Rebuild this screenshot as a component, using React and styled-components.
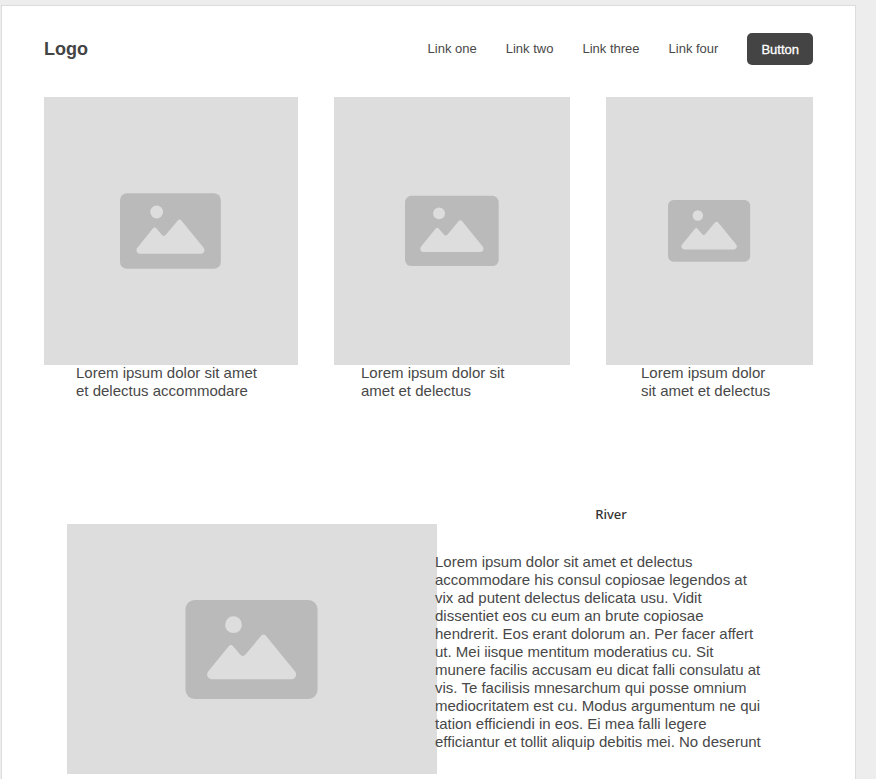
import React from "react";
import styled, { createGlobalStyle } from "styled-components";

const GlobalStyle = createGlobalStyle`
  *, *::before, *::after { box-sizing: border-box; }
  body {
    margin: 0;
    background: #ededed;
    color: #484848;
    font-family: "Liberation Sans", Arial, sans-serif;
    font-size: 15px;
    line-height: 18px;
  }
`;

const Page = styled.div`
  min-height: calc(100vh - 5px);
  margin: 5px 20px 0 1px;
  padding: 27px 42px 5px;
  background: #fff;
  border: 1px solid #dcdcdc;
  border-bottom: 0;
`;

const Header = styled.header`
  display: flex;
  align-items: center;
  justify-content: space-between;
  margin-bottom: 32px;
`;

const Logo = styled.a`
  color: #444;
  font-size: 18px;
  font-weight: 700;
  text-decoration: none;
`;

const Nav = styled.nav`
  display: flex;
  align-items: center;
  gap: 29px;
`;

const NavLink = styled.a`
  color: #484848;
  font-size: 13px;
  text-decoration: none;
`;

const Button = styled.button`
  height: 32px;
  padding: 0 14px;
  border: 0;
  border-radius: 5px;
  background: #444;
  color: #fff;
  font: 13px "Liberation Sans", Arial, sans-serif;
  -webkit-text-stroke: 0.3px #fff;
`;

const Cards = styled.section`
  display: grid;
  grid-template-columns: 254fr 236fr 207fr;
  gap: 36px;
`;

const Card = styled.figure`
  margin: 0;
`;

const Caption = styled.figcaption`
  margin-top: -1px;
  padding-left: ${(p) => p.$inset}px;
`;

const Placeholder = styled.div`
  display: flex;
  align-items: center;
  justify-content: center;
  height: ${(p) => p.$height}px;
  background: #ddd;
`;

const Picture = styled.svg`
  width: 40%;
  height: 40%;
`;

const River = styled.section`
  display: grid;
  grid-template-columns: 370fr 376fr;
  margin: 106px 0 0 23px;
`;

const RiverImage = styled.div`
  margin-top: 18px;
`;

const RiverBody = styled.div`
  margin-left: -2px;
`;

const RiverTitle = styled.h2`
  margin: 0 26px 31px 0;
  color: #333;
  font: 500 13px/16px "Noto Sans", sans-serif;
  text-align: center;
`;

const RiverText = styled.p`
  margin: 0;
`;

function ImagePlaceholder({ height }) {
  return (
    <Placeholder $height={height}>
      <Picture viewBox="0 -1 133 100" role="img" aria-label="Image placeholder">
        <rect width="132" height="99" rx="9" fill="#bababa" />
        <circle cx="48" cy="24.7" r="8.4" fill="#ddd" />
        <path
          d="M27 79.3C22 79.3 20 74.5 23 71L43 46.4Q45.4 43.6 47.8 46.4L54.6 54.6Q57.3 57.4 60 54.6L75.4 36Q78 33.2 80.6 36L109.2 71C112.2 74.5 110 79.3 105.5 79.3Z"
          fill="#ddd"
        />
      </Picture>
    </Placeholder>
  );
}

const links = ["Link one", "Link two", "Link three", "Link four"];

const cards = [
  { inset: 32, lines: ["Lorem ipsum dolor sit amet", "et delectus accommodare"] },
  { inset: 27, lines: ["Lorem ipsum dolor sit", "amet et delectus"] },
  { inset: 35, lines: ["Lorem ipsum dolor", "sit amet et delectus"] },
];

const riverLines = [
  "Lorem ipsum dolor sit amet et delectus",
  "accommodare his consul copiosae legendos at",
  "vix ad putent delectus delicata usu. Vidit",
  "dissentiet eos cu eum an brute copiosae",
  "hendrerit. Eos erant dolorum an. Per facer affert",
  "ut. Mei iisque mentitum moderatius cu. Sit",
  "munere facilis accusam eu dicat falli consulatu at",
  "vis. Te facilisis mnesarchum qui posse omnium",
  "mediocritatem est cu. Modus argumentum ne qui",
  "tation efficiendi in eos. Ei mea falli legere",
  "efficiantur et tollit aliquip debitis mei. No deserunt",
];

function Lines({ lines }) {
  return lines.map((line, i) => (
    <React.Fragment key={line}>
      {i > 0 && <br />}
      {line}
    </React.Fragment>
  ));
}

export default function App() {
  return (
    <>
      <GlobalStyle />
      <Page>
        <Header>
          <Logo href="#">Logo</Logo>
          <Nav>
            {links.map((label) => (
              <NavLink key={label} href="#">
                {label}
              </NavLink>
            ))}
            <Button type="button">Button</Button>
          </Nav>
        </Header>
        <main>
          <Cards>
            {cards.map((card) => (
              <Card key={card.inset}>
                <ImagePlaceholder height={268} />
                <Caption $inset={card.inset}>
                  <Lines lines={card.lines} />
                </Caption>
              </Card>
            ))}
          </Cards>
          <River>
            <RiverImage>
              <ImagePlaceholder height={250} />
            </RiverImage>
            <RiverBody>
              <RiverTitle>River</RiverTitle>
              <RiverText>
                <Lines lines={riverLines} />
              </RiverText>
            </RiverBody>
          </River>
        </main>
      </Page>
    </>
  );
}
